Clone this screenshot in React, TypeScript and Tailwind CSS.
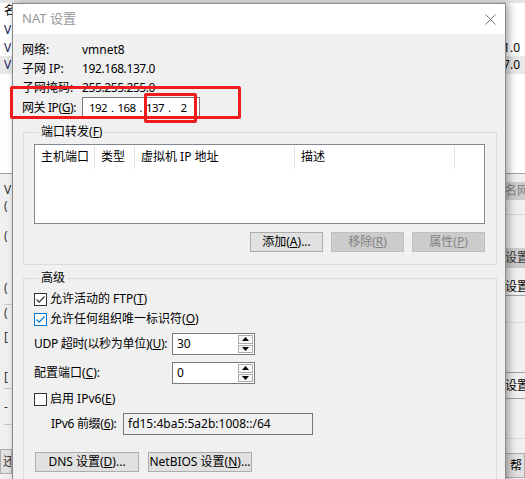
import React from "react";

const Mn = ({ k }: { k: string }) => (
  <>
    (<span className="underline underline-offset-[1px]">{k}</span>)
  </>
);

const CheckBox = ({ checked, focus }: { checked?: boolean; focus?: boolean }) => (
  <div
    className={`w-[13px] h-[13px] shrink-0 bg-white border flex items-center justify-center ${
      focus ? "border-[#0078d7]" : "border-[#333333]"
    }`}
  >
    {checked && (
      <svg width="11" height="11" viewBox="0 0 11 11">
        <path
          d="M1.5 5.5 L4.2 8.2 L9.5 2.5"
          fill="none"
          stroke={focus ? "#0078d7" : "#333333"}
          strokeWidth="1.2"
        />
      </svg>
    )}
  </div>
);

const Btn = ({ children, w, disabled }: { children: React.ReactNode; w: string; disabled?: boolean }) => (
  <div
    className={`${w} h-[20px] shrink-0 whitespace-nowrap flex items-center justify-center border ${
      disabled
        ? "bg-[#cccccc] border-[#bfbfbf] text-[#838383]"
        : "bg-[#e1e1e1] border-[#adadad] text-black"
    }`}
  >
    {children}
  </div>
);

const SpinInput = ({ value }: { value: string }) => (
  <div className="w-[83px] h-[22px] shrink-0 bg-white border border-[#7a7a7a] flex items-stretch">
    <div className="flex-1 pl-[4px] leading-[20px]">{value}</div>
    <div className="w-[16px] flex flex-col py-[1px] pr-[1px] gap-[1px]">
      <div className="flex-1 border border-[#acacac] bg-[#f7f7f7] flex items-center justify-center">
        <svg width="7" height="4" viewBox="0 0 7 4">
          <path d="M0 4 L3.5 0 L7 4 Z" fill="#000" />
        </svg>
      </div>
      <div className="flex-1 border border-[#acacac] bg-[#f7f7f7] flex items-center justify-center">
        <svg width="7" height="4" viewBox="0 0 7 4">
          <path d="M0 0 L3.5 4 L7 0 Z" fill="#000" />
        </svg>
      </div>
    </div>
  </div>
);

const columns = [
  { name: "主机端口", w: "w-[60px]" },
  { name: "类型", w: "w-[40px]" },
  { name: "虚拟机 IP 地址", w: "w-[160px]" },
  { name: "描述", w: "w-[160px]" },
];

const bgRows = [
  { left: "V", right: "", hl: false },
  { left: "V", right: "1.0", hl: false },
  { left: "V", right: "7.0", hl: true },
];

const ipParts = ["192", "168", "137", "2"];

export default function App() {
  return (
    <div className="relative w-[525px] h-[479px] overflow-hidden bg-[#f0f0f0] text-[12px] text-black font-['Noto_Sans','Noto_Sans_CJK_SC',sans-serif]">
      {/* window behind the dialog */}
      <div className="h-[174px] bg-white border-b border-[#a0a0a0]">
        <div className="h-[21px] border-t-[3px] border-[#e5e5e5] pl-[4px] leading-[16px]">名</div>
        {bgRows.map((r, i) => (
          <div
            key={i}
            className={`h-[17.5px] flex justify-between pl-[4px] pr-[5px] leading-[17px] ${r.hl ? "bg-[#e8e8e8]" : ""}`}
          >
            <span className="text-[#1a1a5e]">{r.left}</span>
            <span>{r.right}</span>
          </div>
        ))}
      </div>
      <div className="flex justify-between whitespace-nowrap">
        <div className="w-[12px] flex flex-col leading-[16px] text-[#333] pl-[4px]">
          <div className="h-[8px]" />
          <span>V</span>
          <span>(</span>
          <div className="h-[14px]" />
          <span>(</span>
          <div className="h-[36px]" />
          <span>(</span>
          <div className="h-[9px] border-b border-[#c8c8c8]" />
          <span className="h-[16px]">(</span>
          <div className="h-[8px]" />
          <span>[</span>
          <div className="h-[24px]" />
          <span>[</span>
          <div className="h-[4px] border-b border-[#c8c8c8]" />
          <div className="h-[10px]" />
          <span>-</span>
          <div className="h-[10px] border-b border-[#c8c8c8]" />
          <div className="h-[24px]" />
          <div className="h-[25px] -ml-[4px] pl-[2px] border border-[#adadad] bg-[#e1e1e1] leading-[23px] overflow-hidden">还</div>
        </div>
        <div className="w-[20px] flex flex-col overflow-hidden">
          <div className="h-[8px]" />
          <div className="h-[18px] bg-[#cccccc] text-[#838383] leading-[18px]">名网络</div>
          <div className="h-[15px] border-b border-[#d5d5d5]" />
          <div className="h-[33px]" />
          <div className="h-[20px] bg-[#cccccc] leading-[20px] text-[#333]">设置(</div>
          <div className="h-[10px]" />
          <div className="h-[18px] leading-[18px] border-b border-[#a0a0a0]">设置(</div>
          <div className="h-[27px] border-b border-[#dcdcdc]" />
          <div className="h-[50px] border-b border-[#a0a0a0]" />
          <div className="h-[26px] leading-[26px] border-b border-[#a0a0a0]">设置</div>
          <div className="h-[40px] border-b border-[#dcdcdc]" />
          <div className="h-[14px]" />
          <div className="h-[25px] border border-[#adadad] bg-[#e1e1e1] leading-[23px] pl-[4px]">帮</div>
        </div>
      </div>

      {/* NAT dialog */}
      <div className="absolute left-[12px] top-[3px] w-[494px] h-[490px] border border-[#8a8a8a] bg-[#f0f0f0] shadow-[3px_0_8px_rgba(0,0,0,0.35)]">
        <div className="h-[30px] bg-white flex items-center justify-between pl-[9px] pr-[9px]">
          <span className="text-[13px] text-[#999999]">NAT 设置</span>
          <svg width="11" height="11" viewBox="0 0 11 11">
            <path d="M0.5 0.5 L10.5 10.5 M10.5 0.5 L0.5 10.5" stroke="#777" strokeWidth="1" />
          </svg>
        </div>

        <div className="relative pl-[9px] pr-[8px] pt-[6px] whitespace-nowrap">
          <div className="grid grid-cols-[60px_1fr] leading-[19px]">
            <span>网络:</span>
            <span>vmnet8</span>
            <span>子网 IP:</span>
            <span className="tracking-[-0.4px]">192.168.137.0</span>
            <span>子网掩码:</span>
            <span className="tracking-[-0.4px]">255.255.255.0</span>
          </div>
          <div className="flex items-center h-[22px]">
            <span className="w-[60px] shrink-0 tracking-[-0.4px]">
              网关 IP<Mn k="G" />:
            </span>
            <div className="w-[118px] h-[22px] shrink-0 bg-white border border-[#7a7a7a] flex items-center pl-[5px] text-[11.5px] tracking-[-0.5px]">
              {ipParts.map((p, i) => (
                <React.Fragment key={i}>
                  <span className="w-[20px] shrink-0 text-center">{p}</span>
                  {i < 3 && <span className="w-[8.5px] shrink-0 text-center">.</span>}
                </React.Fragment>
              ))}
            </div>
          </div>

          {/* red annotation boxes */}
          <div className="absolute left-[-3px] top-[52px] w-[231px] h-[33px] border-[3px] border-[#ee1c1c] rounded-[2px]" />
          <div className="absolute left-[131px] top-[59px] w-[53px] h-[30px] border-[3px] border-[#ee1c1c] rounded-[2px]" />

          <fieldset className="mt-[5px] ml-[1px] border border-[#dcdcdc] pl-[10px] pr-[11px] pb-[12px]">
            <legend className="ml-[5px] px-[2px] leading-[16px]">
              端口转发<Mn k="F" />
            </legend>
            <div className="mt-[4px] h-[80px] bg-white border border-[#828790]">
              <div className="flex h-[24px] pt-[1px]">
                {columns.map((c) => (
                  <div key={c.name} className={`${c.w} border-r border-[#e5e5e5] pl-[6px] leading-[22px]`}>
                    {c.name}
                  </div>
                ))}
              </div>
            </div>
            <div className="mt-[8px] flex justify-end gap-[8px]">
              <Btn w="w-[73px]">
                添加<Mn k="A" />...
              </Btn>
              <Btn w="w-[73px]" disabled>
                移除<Mn k="R" />
              </Btn>
              <Btn w="w-[73px]" disabled>
                属性<Mn k="P" />
              </Btn>
            </div>
          </fieldset>

          <fieldset className="mt-[5px] ml-[1px] border border-[#dcdcdc] pl-[10px] pr-[11px] pb-[20px]">
            <legend className="ml-[5px] px-[2px] leading-[16px]">高级</legend>
            <div className="mt-[3px] h-[20px] flex items-center gap-[3px]">
              <CheckBox checked />
              <span>
                允许活动的 FTP<Mn k="T" />
              </span>
            </div>
            <div className="h-[20px] flex items-center gap-[3px]">
              <CheckBox checked focus />
              <span>
                允许任何组织唯一标识符<Mn k="O" />
              </span>
            </div>
            <div className="mt-[4px] flex items-center">
              <span className="w-[138px] shrink-0 tracking-[-0.3px]">
                UDP 超时(以秒为单位)<Mn k="U" />:
              </span>
              <SpinInput value="30" />
            </div>
            <div className="mt-[7px] flex items-center">
              <span className="w-[138px] shrink-0">
                配置端口<Mn k="C" />:
              </span>
              <SpinInput value="0" />
            </div>
            <div className="mt-[5px] h-[20px] flex items-center gap-[3px]">
              <CheckBox />
              <span>
                启用 IPv6<Mn k="E" />
              </span>
            </div>
            <div className="mt-[4px] flex items-center pl-[17px]">
              <span className="w-[72px] shrink-0 tracking-[-0.3px]">
                IPv6 前缀<Mn k="6" />:
              </span>
              <div className="w-[190px] h-[22px] shrink-0 border border-[#7a7a7a] bg-[#f0f0f0] pl-[4px] leading-[20px]">
                fd15:4ba5:5a2b:1008::/64
              </div>
            </div>
            <div className="mt-[17px] flex gap-[9px] pl-[1px]">
              <Btn w="w-[104px]">
                DNS 设置<Mn k="D" />...
              </Btn>
              <Btn w="w-[104px]">
                NetBIOS 设置<Mn k="N" />...
              </Btn>
            </div>
          </fieldset>
        </div>
      </div>
    </div>
  );
}
